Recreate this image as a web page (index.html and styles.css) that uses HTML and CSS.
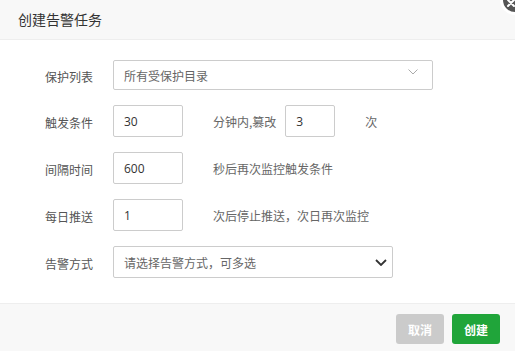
FILE: index.html
```html
<!DOCTYPE html>
<html lang="zh">
<head>
<meta charset="utf-8">
<link rel="stylesheet" href="styles.css">
</head>
<body>
<div class="dialog">
  <div class="header">创建告警任务</div>
  <span class="close" aria-label="关闭">
    <svg width="10" height="10" viewBox="0 0 10 10"><path d="M2 2L8 8M8 2L2 8" stroke="#fff" stroke-width="2" stroke-linecap="round"/></svg>
  </span>
  <div class="body">
    <div class="row">
      <label class="label">保护列表</label>
      <div class="select select-wide">
        <span>所有受保护目录</span>
        <svg class="chev-thin" width="10" height="6" viewBox="0 0 10 6"><path d="M0.5 0.5L5 5L9.5 0.5" fill="none" stroke="#aaa" stroke-width="1"/></svg>
      </div>
    </div>
    <div class="row">
      <label class="label">触发条件</label>
      <div class="input">30</div>
      <span class="text">分钟内,篡改</span>
      <div class="input input-sm">3</div>
      <span class="text">次</span>
    </div>
    <div class="row">
      <label class="label">间隔时间</label>
      <div class="input">600</div>
      <span class="text">秒后再次监控触发条件</span>
    </div>
    <div class="row">
      <label class="label">每日推送</label>
      <div class="input">1</div>
      <span class="text">次后停止推送，次日再次监控</span>
    </div>
    <div class="row">
      <label class="label">告警方式</label>
      <div class="select select-mid">
        <span>请选择告警方式，可多选</span>
        <svg class="chev-bold" width="12" height="7" viewBox="0 0 12 7"><path d="M1 1L6 6L11 1" fill="none" stroke="#333" stroke-width="1.8"/></svg>
      </div>
    </div>
  </div>
  <div class="footer">
    <button class="btn btn-cancel">取消</button>
    <button class="btn btn-ok">创建</button>
  </div>
</div>
</body>
</html>
```

FILE: styles.css
```css
* { box-sizing: border-box; }
html, body { margin: 0; padding: 0; background: #fff; }
body {
  font-family: "Microsoft YaHei", "Noto Sans CJK SC", "Open Sans", sans-serif;
  font-size: 12px;
  color: #555;
  overflow: hidden;
}
.dialog { position: relative; width: 515px; height: 351px; background: #fff; }
.header {
  height: 40px;
  line-height: 38px;
  padding-left: 18px;
  font-size: 14px;
  color: #333;
  background: #f8f8f8;
  border-bottom: 1px solid #eee;
}
.close {
  position: absolute;
  right: -15px;
  top: -15px;
  width: 30px;
  height: 30px;
  border-radius: 50%;
  background: #555;
  border: 3px solid #fff;
  display: flex;
  align-items: flex-end;
  justify-content: flex-start;
  padding: 0 0 4px 3px;
}
.body { padding: 20px 0 25px 0; height: 263px; }
.row { display: flex; align-items: center; margin-bottom: 15px; height: 32px; }
.row:first-child { height: 30px; }
.row:last-child { margin-bottom: 0; }
.label {
  width: 113px;
  padding-right: 20px;
  text-align: right;
  color: #555;
  line-height: 1;
  padding-top: 3px;
}
.input, .select {
  height: 100%;
  border: 1px solid #ccc;
  border-radius: 2px;
  padding-left: 10px;
  display: flex;
  align-items: center;
  color: #333;
  font-family: "Open Sans", "Noto Sans CJK SC", sans-serif;
}
.input { width: 70px; }
.input-sm { width: 50px; margin-left: 9px; }
.select { justify-content: space-between; color: #666; font-family: "Microsoft YaHei", "Noto Sans CJK SC", sans-serif; }
.select-wide { width: 320px; padding-right: 14px; align-items: flex-start; padding-top: 6px; }
.select-wide .chev-thin { margin-top: 2px; }
.select-mid { width: 280px; padding-right: 5px; }
.text { margin-left: 30px; color: #666; }
.footer {
  height: 48px;
  background: #f8f8f8;
  border-top: 1px solid #eee;
  display: flex;
  justify-content: flex-end;
  align-items: flex-start;
  padding: 10px 15px 0 0;
  gap: 8px;
}
.btn {
  width: 48px;
  height: 30px;
  border: 0;
  border-radius: 3px;
  color: #fff;
  font-weight: bold;
  font-size: 12px;
  font-family: "Microsoft YaHei", "Noto Sans CJK SC", sans-serif;
  padding: 0;
}
.btn-cancel { background: #cbcbcb; }
.btn-ok { background: #20a53a; }
```
